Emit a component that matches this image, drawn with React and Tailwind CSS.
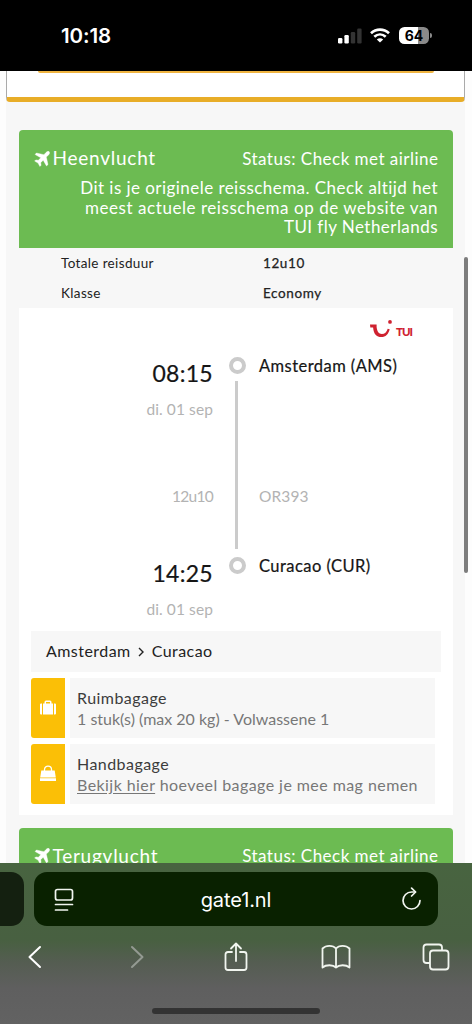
import React from 'react';

function StatusBar() {
  return (
    <header className="h-[71px] shrink-0 bg-black text-white flex items-center justify-between pl-[61px] pr-[40px]">
      <span className="font-['Inter'] font-semibold text-[20.5px] leading-6 tracking-[-0.1px]">10:18</span>
      <div className="flex items-center">
        <svg width="24" height="16" viewBox="0 0 24 16" className="mr-[8px]">
          <rect x="0" y="10" width="4.4" height="5.5" rx="1.2" fill="#fff" />
          <rect x="6.4" y="7" width="4.4" height="8.5" rx="1.2" fill="#fff" />
          <rect x="12.8" y="4" width="4.4" height="11.5" rx="1.2" fill="#333" />
          <rect x="19.2" y="0.5" width="4.4" height="15" rx="1.2" fill="#333" />
        </svg>
        <svg width="20" height="15" viewBox="0 0 20 15" className="mr-[9px]" fill="none" stroke="#fff" strokeWidth="2.7">
          <path d="M1 5.2C6.2.3 13.8.3 19 5.2" />
          <path d="M4.3 8.8c3.4-3.1 8-3.1 11.4 0" />
          <path d="M10 14.6 6.8 11.5c1.8-1.6 4.6-1.6 6.4 0z" fill="#fff" stroke="none" />
        </svg>
        <div className="w-[30px] h-[17px] rounded-[5.5px] bg-[linear-gradient(90deg,#fff_64%,#8a8a8a_64%)] text-black flex items-center justify-center font-['Inter'] font-bold text-[14px] leading-none">64</div>
        <div className="w-[2px] h-[5px] ml-px rounded-r-full bg-[#8a8a8a]" />
      </div>
    </header>
  );
}

function PlaneIcon() {
  return (
    <svg width="16" height="16" viewBox="0 0 16 16" fill="#fff" stroke="#fff" strokeWidth="0.4">
      <path d="M15.200.7c.8.8.3 2.200-.7 3.200l-2.200 2.200 1.700 7.500-1.500 1.300-3.300-5.700-2.500 2.500.4 2.500-1.200 1.200-1.900-3.400L.6 10.100l1.200-1.200 2.500.4 2.500-2.500L1.100 3.500 2.400 2l7.500 1.700L12 1.500c1-1 2.500-1.500 3.200-.8z" />
    </svg>
  );
}

function FlightHeader({ title, children }) {
  return (
    <div className="bg-[#6cbb52] text-white rounded-t-[4px] px-[15px] pt-[18px] text-[17px] tracking-[0.45px]">
      <div className="h-[21px] flex items-center justify-between">
        <div className="flex items-center gap-[3px] ml-[-0.5px]">
          <PlaneIcon />
          <span className="text-[19px] tracking-[0.75px]">{title}</span>
        </div>
        <span className="mr-[-0.5px] tracking-[0.48px]">Status: Check met airline</span>
      </div>
      {children}
    </div>
  );
}

function InfoRow({ label, value }) {
  return (
    <div className="flex h-[30px] items-center text-[13.5px] text-[#222] tracking-[0.35px]">
      <span className="w-[202px]">{label}</span>
      <span className="tracking-[0.6px] [-webkit-text-stroke:0.25px_currentColor]">{value}</span>
    </div>
  );
}

function Stop({ time, date, place }) {
  return (
    <div className="flex h-[66px]">
      <div className="w-[194px] text-right">
        <div className="text-[23px] leading-[26px] mt-[3px] tracking-[0.3px] text-[#151515] [-webkit-text-stroke:0.2px_currentColor]">{time}</div>
        <div className="text-[15.5px] leading-5 mt-[13px] tracking-[0.1px] text-[#b3b3b3]">{date}</div>
      </div>
      <div className="w-[17px] h-[17px] ml-[16px] rounded-full border-[4px] border-[#cbcbcb]" />
      <div className="ml-[13px] text-[16.5px] leading-[19px] tracking-[0.45px] text-[#151515] [-webkit-text-stroke:0.2px_currentColor]">{place}</div>
    </div>
  );
}

function BaggageRow({ icon, title, children }) {
  return (
    <div className="flex h-[60px]">
      <div className="w-[34px] mr-[5px] rounded-l-[3px] bg-[#fbbf06] flex items-center justify-center">{icon}</div>
      <div className="w-[365px] bg-[#f7f7f7] pl-[7px] pt-[9px] text-[16px] leading-[21px] text-[#777] whitespace-nowrap">
        <div className="text-[#3c3c3c] tracking-[0.45px]">{title}</div>
        <div>{children}</div>
      </div>
    </div>
  );
}

function TuiLogo() {
  return (
    <svg width="46" height="20" viewBox="0 0 46 20">
      <path d="M0 4.500h6.600v2.600c.5 4.500 2.300 6.900 5.200 6.900 3 0 4.800-2 5.900-5.300l2 .6c-1.300 5-4 7.800-8.400 7.800-4.800 0-7.700-3.300-8.200-9.700H.3z" fill="#cf2230" />
      <circle cx="20" cy="1.900" r="1.900" fill="#cf2230" />
      <text x="26" y="16" fontSize="11.5" fontWeight="900" fill="#cf2230" fontFamily="Lato, sans-serif" textLength="17">TUI</text>
    </svg>
  );
}

function SuitcaseIcon() {
  return (
    <svg width="16" height="16" viewBox="0 0 16 16" fill="#fff">
      <path d="M0 4.500Q0 3.500 1 3.500h1v11H1q-1 0-1-1zM3 3.500h1.500V2Q4.500.5 6 .5h4q1.500 0 1.500 1.500v1.500H13v11H3zM6 3.500h4V2H6zM14 3.500h1q1 0 1 1v9q0 1-1 1h-1z" />
    </svg>
  );
}

function HandbagIcon() {
  return (
    <svg width="16" height="17" viewBox="0 0 16 17">
      <path d="M4.500 7V4.500C4.500 0 11.500 0 11.500 4.500V7" fill="none" stroke="#fff" strokeWidth="1.3" />
      <path d="M1.300 5.500h13.400l1.100 7H.2zM0 13.300h16V16H0z" fill="#fff" />
    </svg>
  );
}

function BrowserBar() {
  return (
    <footer className="h-[161px] shrink-0 overflow-hidden bg-[linear-gradient(180deg,#486440_0%,#486041_48%,#555d52_62%,#5f5f5f_78%,#626262_100%)] text-white pt-[9px]">
      <div className="flex h-[54px]">
        <div className="w-[24px] mr-[10px] rounded-r-[13px] bg-[#142010]" />
        <div className="w-[404px] rounded-[13px] bg-[#092100] flex items-center justify-between pl-[20px] pr-[16px]">
          <svg width="20" height="24" viewBox="0 0 20 24" fill="none" stroke="#f1f5ef" strokeWidth="1.7" strokeLinecap="round" className="mt-px">
            <rect x="1.5" y="1.5" width="17" height="10.5" rx="2" />
            <path d="M1.500 16.500h17M1.500 22h12" />
          </svg>
          <span className="font-['Inter'] text-[20px] tracking-[-0.1px] pt-[2px] mr-[3px]">gate1.nl</span>
          <svg width="21" height="24" viewBox="0 0 21 24" fill="none" stroke="#f1f5ef" strokeWidth="1.7" strokeLinecap="round" strokeLinejoin="round" className="-mt-px">
            <path d="M19 13.500A8.500 8.500 0 1 1 10.500 5h3.800" />
            <path d="m10.600 1.100 4 3.900-4 4" />
          </svg>
        </div>
      </div>
      <nav className="mt-[15px] h-[32px] flex items-center pl-[28px]">
        <svg width="14" height="24" viewBox="0 0 14 24" fill="none" stroke="#fff" strokeWidth="2" strokeLinecap="round" strokeLinejoin="round">
          <path d="M12 2 1.500 12 12 22" />
        </svg>
        <svg width="14" height="24" viewBox="0 0 14 24" fill="none" stroke="#949a92" strokeWidth="2" strokeLinecap="round" strokeLinejoin="round" className="ml-[88px]">
          <path d="m2 2 10.500 10L2 22" />
        </svg>
        <svg width="24" height="30" viewBox="0 0 24 30" fill="none" stroke="#f1f5ef" strokeWidth="1.8" strokeLinecap="round" strokeLinejoin="round" className="ml-[80px] -mt-px">
          <path d="M8 10H4q-2.500 0-2.500 2.500v13Q1.500 28 4 28h16q2.500 0 2.500-2.500v-13Q22.500 10 20 10h-4M12 19V2M7 6.500 12 1.500l5 5" />
        </svg>
        <svg width="30" height="26" viewBox="0 0 30 26" fill="none" stroke="#f1f5ef" strokeWidth="1.8" strokeLinecap="round" strokeLinejoin="round" className="ml-[73px]">
          <path d="M15 4.500C12 1 5 1 1.500 4.500V23.500C5 20.500 12 20.500 15 23.500 18 20.500 25 20.500 28.500 23.500V4.500C25 1 18 1 15 4.500zV23.500" />
        </svg>
        <svg width="28" height="28" viewBox="0 0 28 28" fill="none" stroke="#f1f5ef" strokeWidth="1.8" strokeLinejoin="round" className="ml-[71px]">
          <rect x="8" y="7.5" width="18.5" height="19" rx="3" />
          <path d="M8 20H4.500q-3 0-3-3V4.500q0-3 3-3H17q3 0 3 3v3" />
        </svg>
      </nav>
      <div className="mt-[35px] mx-auto w-[168px] h-[6px] rounded-full bg-[#333]" />
    </footer>
  );
}

export default function App() {
  return (
    <div className="w-[472px] h-[1024px] overflow-hidden flex flex-col bg-white font-['Lato',sans-serif]">
      <StatusBar />
      <main className="relative h-[792px] shrink-0 overflow-hidden bg-[#fdfdfd] pl-[6px] pr-[7px]">
        <div className="h-full bg-[#f7f7f7]">
          <div className="h-[31px] bg-white border-x border-x-[#aaa] border-b-[5px] border-b-[#e8ad28] rounded-b-[4px]">
            <div className="h-[2px] ml-[31px] mr-[30px] bg-[#efb441] rounded-b-[2px]" />
          </div>
          <div className="mt-[28px] ml-[13px] w-[434px]">
            <FlightHeader title="Heenvlucht">
              <p className="text-right leading-[19.5px] pt-[9px] pb-[11px] whitespace-nowrap">
                Dit is je originele reisschema. Check altijd het<br />
                <span className="tracking-[0.55px]">meest actuele reisschema op de website van</span><br />
                TUI fly Netherlands
              </p>
            </FlightHeader>
            <div className="pl-[42px] pt-px h-[60px]">
              <InfoRow label="Totale reisduur" value="12u10" />
              <InfoRow label="Klasse" value="Economy" />
            </div>
            <section className="h-[507px] bg-white">
              <div className="h-[49px] pt-[12px] pl-[351px]">
                <TuiLogo />
              </div>
              <div className="h-[200px] flex flex-col">
                <Stop time="08:15" date="di. 01 sep" place="Amsterdam (AMS)" />
                <div className="-mt-[42px] flex items-center text-[15.5px] text-[#b3b3b3]">
                  <span className="w-[194px] text-right pt-[64px] tracking-[-0.7px]">12u10</span>
                  <span className="w-[3px] h-[168px] ml-[22px] mr-[21px] bg-[#cbcbcb]" />
                  <span className="pt-[64px] tracking-[0.1px]">OR393</span>
                </div>
              </div>
              <Stop time="14:25" date="di. 01 sep" place="Curacao (CUR)" />
              <div className="mt-[8px] ml-[12px] w-[410px] h-[41px] bg-[#f7f7f7] flex items-center pl-[15px] text-[16px] tracking-[0.45px] text-[#222]">
                <span>Amsterdam</span>
                <svg width="6" height="10" viewBox="0 0 6 10" fill="none" stroke="#222" strokeWidth="1.4" className="ml-[7px] mr-[8px] mt-[2px]">
                  <path d="m1 1 4 4-4 4" />
                </svg>
                <span>Curacao</span>
              </div>
              <div className="mt-[6px] ml-[12px] flex flex-col gap-[6px]">
                <BaggageRow icon={<SuitcaseIcon />} title="Ruimbagage">1 stuk(s) (max 20 kg) - Volwassene 1</BaggageRow>
                <BaggageRow icon={<HandbagIcon />} title="Handbagage">
                  <span className="tracking-[0.43px]"><a className="underline underline-offset-2">Bekijk hier</a> hoeveel bagage je mee mag nemen</span>
                </BaggageRow>
              </div>
            </section>
            <div className="mt-[13px]">
              <FlightHeader title="Terugvlucht">
                <div className="h-10" />
              </FlightHeader>
            </div>
          </div>
        </div>
        <div className="absolute left-[464px] top-[186px] w-[4px] h-[316px] rounded-full bg-[#7d7d7d]" />
      </main>
      <BrowserBar />
    </div>
  );
}
